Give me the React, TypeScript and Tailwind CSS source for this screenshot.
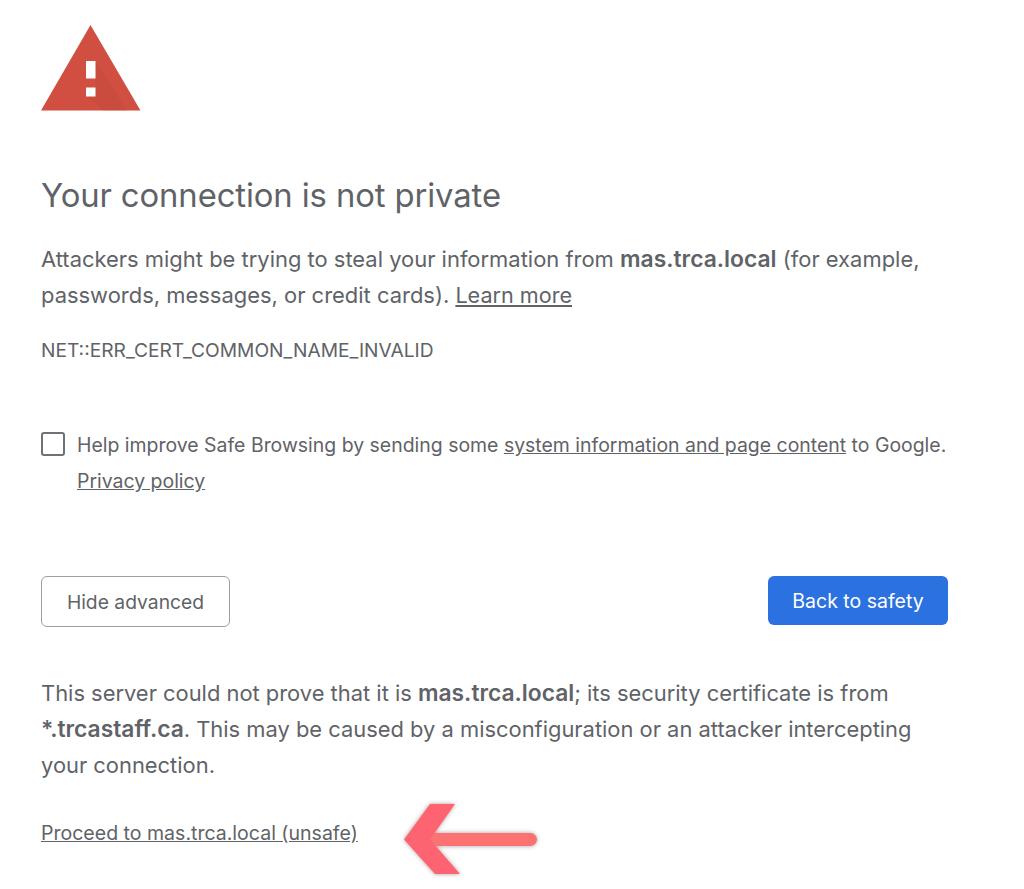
import React from "react";

const WarningIcon = () => (
  <svg width="100" height="86" viewBox="0 0 100 86" className="block">
    <path d="M0 85.5 L49.5 0 L99.5 85.5 Z" fill="#d04f41" />
    <path d="M54.5 36 L85.5 85.5 L62 85.5 L45 71 L54.5 71 Z" fill="#b8453a" opacity="0.3" />
    <rect x="45" y="36" width="9.5" height="17.5" fill="#fff" />
    <rect x="45" y="62.5" width="9.5" height="9" fill="#fff" />
  </svg>
);

const Arrow = () => (
  <svg width="150" height="84" viewBox="0 0 150 84" className="block">
    <defs>
      <filter id="soft" x="-20%" y="-20%" width="140%" height="140%">
        <feDropShadow dx="0" dy="0" stdDeviation="2" floodColor="#6b4a4a" floodOpacity="0.55" />
      </filter>
    </defs>
    <g filter="url(#soft)">
      <rect x="28" y="34" width="110" height="13" rx="6.5" fill="#fb7273" />
      <path d="M5 40.5 L31 5 L56 5 L31 40.5 L61 75 L36 75 Z" fill="#fd6470" />
    </g>
  </svg>
);

const App = () => {
  return (
    <div className="w-[1024px] h-[889px] bg-white overflow-hidden relative font-['Inter',sans-serif] text-[#5f6368]">
      <div className="pl-[41px] pt-[25px] w-[948px]">
        <WarningIcon />
        <h1 className="mt-[62px] text-[32.8px] leading-[44px] font-normal tracking-[-0.1px]">Your connection is not private</h1>
        <p className="mt-[24px] text-[21.95px] leading-[36px]">
          Attackers might be trying to steal your information from <b className="font-semibold text-[22.85px]">mas.trca.local</b> (for example, passwords, messages, or credit cards). <span className="underline text-[21.6px]">Learn more</span>
        </p>
        <div className="mt-[19px] text-[19.2px] leading-[36px]">NET::ERR_CERT_COMMON_NAME_INVALID</div>
        <div className="mt-[59px] flex items-start gap-[12px]">
          <div className="w-[24px] h-[24px] mt-[5px] shrink-0 rounded-[3px] border-2 border-[#6e7276] bg-white"></div>
          <p className="text-[19.45px] leading-[36px]">
            Help improve Safe Browsing by sending some <span className="underline">system information and page content</span> to Google.<br /><span className="underline">Privacy policy</span>
          </p>
        </div>
        <div className="mt-[77px] flex justify-between items-start">
          <button className="w-[189px] h-[51px] pt-[2px] rounded-[6px] border border-[#9aa0a6] bg-white text-[19.3px] text-[#5f6368]">Hide advanced</button>
          <button className="w-[180px] h-[49px] pt-[2px] rounded-[6px] bg-[#2b72e0] text-[19.5px] text-white">Back to safety</button>
        </div>
        <p className="mt-[48px] text-[21.9px] leading-[36px]">
          This server could not prove that it is <b className="font-semibold text-[22.8px]">mas.trca.local</b>; its security certificate is from <b className="font-semibold text-[22.8px]">*.trcastaff.ca</b>. This may be caused by a misconfiguration or an attacker intercepting your connection.
        </p>
        <div className="mt-[32px] text-[19.55px] leading-[36px] underline">Proceed to mas.trca.local (unsafe)</div>
      </div>
      <div className="absolute left-[399px] top-[799px]">
        <Arrow />
      </div>
    </div>
  );
};

export default App;
